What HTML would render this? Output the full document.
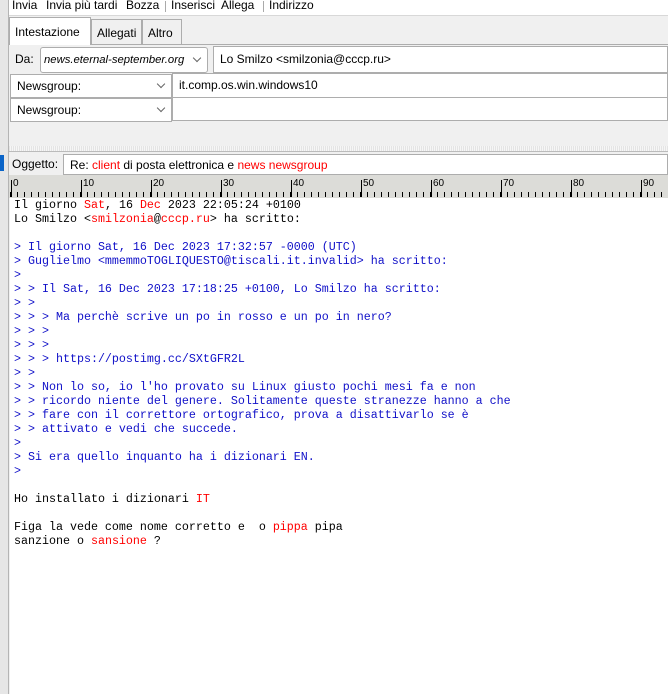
<!DOCTYPE html>
<html><head><meta charset="utf-8"><style>
*{margin:0;padding:0;box-sizing:border-box}
body{width:668px;height:694px;overflow:hidden;background:#f0f0f0;font-family:"Liberation Sans",sans-serif;font-size:12px;color:#000;position:relative}
.a{position:absolute}
.strip{left:0;top:0;width:9px;height:694px;background:#e6e6e6;border-right:1px solid #b4b4b4}
.tb{left:9px;top:0;width:659px;height:16px;background:#fff;border-bottom:1px solid #d8d8d8}
.tb span{position:absolute;top:-2px;font-size:12px}
.sep{position:absolute;top:1px;width:1px;height:11px;background:#aaa}
.tab{top:19px;height:25px;border:1px solid #adadad;border-bottom:none;background:#f0f0f0;padding:6px 0 0 5px}
.sel{background:#fff;border:1px solid #adadad}
.chev{position:absolute;right:7px;top:6px;width:6px;height:6px;border-right:1px solid #666;border-bottom:1px solid #666;transform:rotate(45deg)}
.inp{background:#fff;border:1px solid #adadad;padding-left:6px}
.ruler{left:9px;top:175px;width:659px;height:23px;background:#dcdcd8}
.mt{position:absolute;top:5px;width:1px;height:17px;background:#000}
.mn{position:absolute;top:3px;font-size:10px;}
.body{left:10px;top:198px;width:658px;height:496px;background:#fff}
pre{font-family:"Liberation Mono",monospace;font-size:11.67px;line-height:14px;position:absolute;left:4px;top:0;white-space:pre}
.r{color:#f00}.b{color:#1010c8}
</style></head><body>
<div class="a strip"></div>
<div class="a" style="left:0;top:155px;width:4px;height:16px;background:#0a64c8"></div>
<div class="a tb">
<span style="left:3px">Invia</span><span style="left:37px">Invia più tardi</span><span style="left:117px">Bozza</span><div class="sep" style="left:156px"></div>
<span style="left:162px">Inserisci</span><span style="left:212px">Allega</span><div class="sep" style="left:254px"></div><span style="left:260px">Indirizzo</span>
</div>
<div class="a" style="left:9px;top:44px;width:659px;height:1px;background:#adadad"></div>
<div class="a tab" style="left:9px;top:17px;width:82px;height:28px;background:#fff;padding-top:7px">Intestazione</div>
<div class="a tab" style="left:91px;width:51px">Allegati</div>
<div class="a tab" style="left:142px;width:40px">Altro</div>
<div class="a" style="left:15px;top:52px">Da:</div>
<div class="a sel" style="left:40px;top:47px;width:168px;height:26px;border-radius:3px;padding:6px 0 0 3px;font-style:italic;font-size:11.3px">news.eternal-september.org<div class="chev" style="top:7px"></div></div>
<div class="a inp" style="left:213px;top:46px;width:455px;height:27px;padding:5px 0 0 6px">Lo Smilzo &lt;smilzonia@cccp.ru&gt;</div>
<div class="a sel" style="left:10px;top:74px;width:162px;height:24px;padding:4px 0 0 6px">Newsgroup:<div class="chev"></div></div>
<div class="a inp" style="left:172px;top:73px;width:496px;height:25px;padding-top:4px">it.comp.os.win.windows10</div>
<div class="a sel" style="left:10px;top:98px;width:162px;height:24px;padding:4px 0 0 6px">Newsgroup:<div class="chev"></div></div>
<div class="a inp" style="left:172px;top:97px;width:496px;height:24px"></div>
<div class="a" style="left:9px;top:146px;width:659px;height:6px;background:repeating-linear-gradient(90deg,#e4e4e4 0 1px,#f6f6f6 1px 2px);border-bottom:1px solid #bbb"></div>
<div class="a" style="left:12px;top:157px">Oggetto:</div>
<div class="a inp" style="left:63px;top:154px;width:605px;height:21px;padding-top:3px">Re: <span class="r">client</span> di posta elettronica e <span class="r">news newsgroup</span></div>
<div class="a ruler">
<div style="position:absolute;left:1px;top:17px;width:658px;height:5px;background:repeating-linear-gradient(90deg,#000 0 1px,transparent 1px 7px)"></div>
<div class="mt" style="left:2px"></div><div class="mn" style="left:4px">0</div>
<div class="mt" style="left:72px"></div><div class="mn" style="left:74px">10</div>
<div class="mt" style="left:142px"></div><div class="mn" style="left:144px">20</div>
<div class="mt" style="left:212px"></div><div class="mn" style="left:214px">30</div>
<div class="mt" style="left:282px"></div><div class="mn" style="left:284px">40</div>
<div class="mt" style="left:352px"></div><div class="mn" style="left:354px">50</div>
<div class="mt" style="left:422px"></div><div class="mn" style="left:424px">60</div>
<div class="mt" style="left:492px"></div><div class="mn" style="left:494px">70</div>
<div class="mt" style="left:562px"></div><div class="mn" style="left:564px">80</div>
<div class="mt" style="left:632px"></div><div class="mn" style="left:634px">90</div>
</div>
<div class="a body"><pre>Il giorno <span class="r">Sat</span>, 16 <span class="r">Dec</span> 2023 22:05:24 +0100
Lo Smilzo &lt;<span class="r">smilzonia</span>@<span class="r">cccp.ru</span>&gt; ha scritto:

<span class="b">&gt; Il giorno Sat, 16 Dec 2023 17:32:57 -0000 (UTC)
&gt; Guglielmo &lt;mmemmoTOGLIQUESTO@tiscali.it.invalid&gt; ha scritto:
&gt;
&gt; &gt; Il Sat, 16 Dec 2023 17:18:25 +0100, Lo Smilzo ha scritto:
&gt; &gt;
&gt; &gt; &gt; Ma perchè scrive un po in rosso e un po in nero?
&gt; &gt; &gt;
&gt; &gt; &gt;
&gt; &gt; &gt; https://postimg.cc/SXtGFR2L
&gt; &gt;
&gt; &gt; Non lo so, io l'ho provato su Linux giusto pochi mesi fa e non
&gt; &gt; ricordo niente del genere. Solitamente queste stranezze hanno a che
&gt; &gt; fare con il correttore ortografico, prova a disattivarlo se è
&gt; &gt; attivato e vedi che succede.
&gt;
&gt; Si era quello inquanto ha i dizionari EN.
&gt;</span>

Ho installato i dizionari <span class="r">IT</span>

Figa la vede come nome corretto e  o <span class="r">pippa</span> pipa
sanzione o <span class="r">sansione</span> ?</pre></div>
</body></html>
